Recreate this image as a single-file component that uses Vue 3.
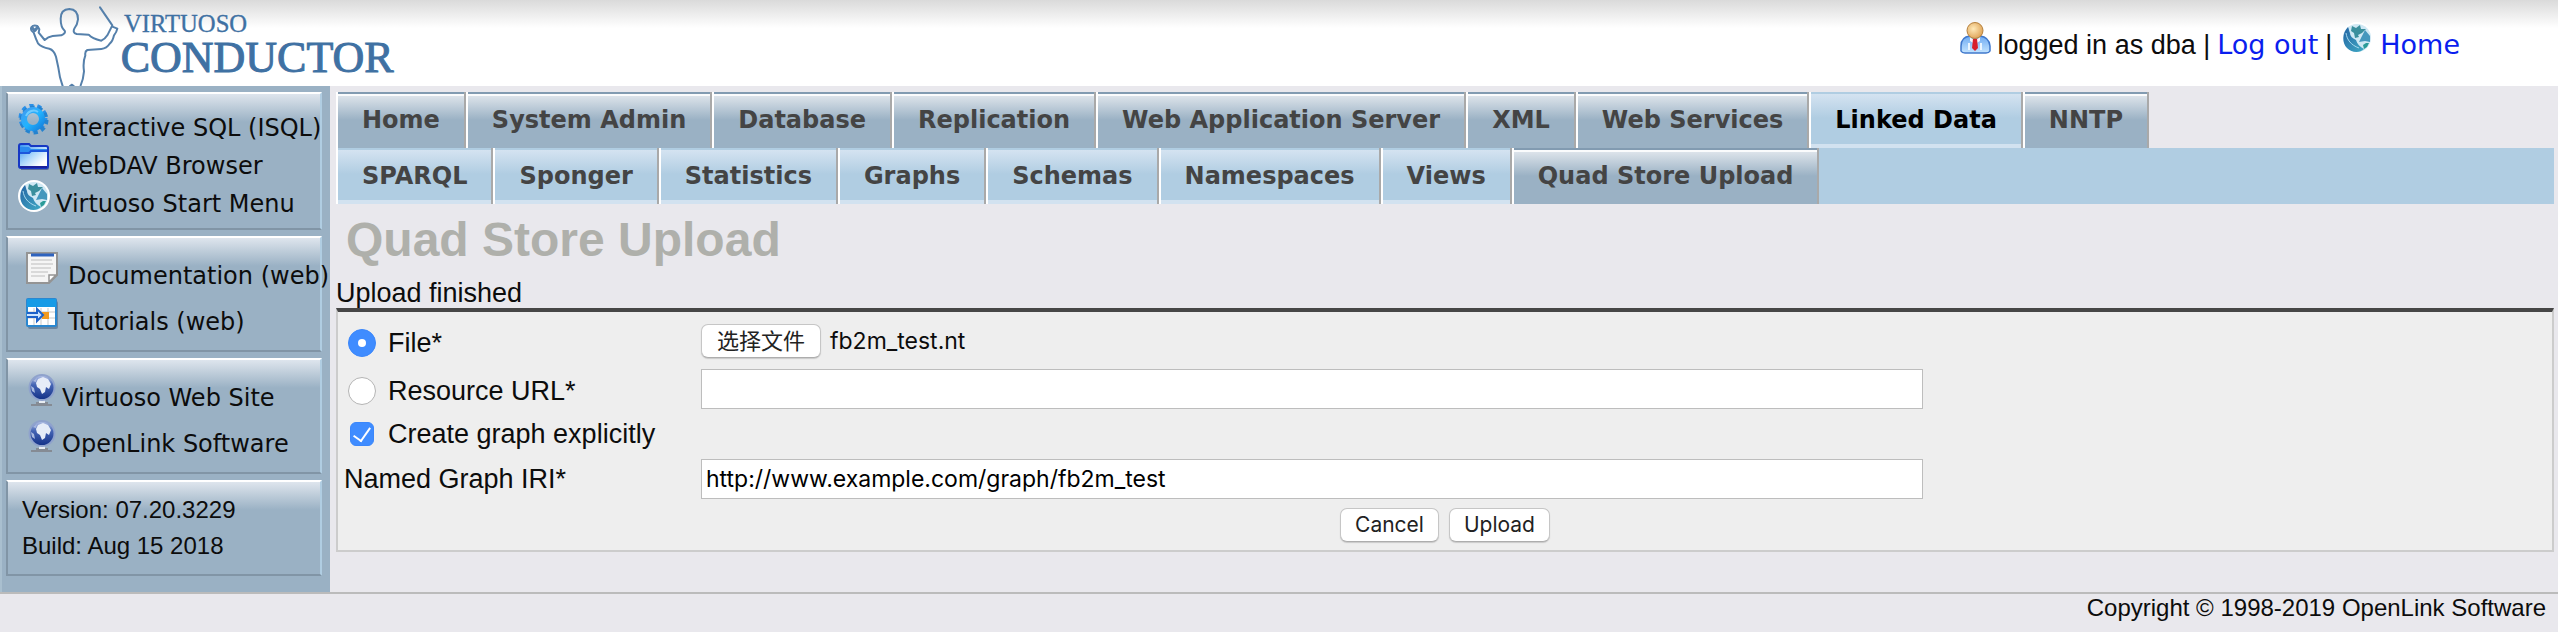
<script setup>
import { ref } from 'vue'

const mainTabs = ['Home', 'System Admin', 'Database', 'Replication', 'Web Application Server', 'XML', 'Web Services', 'Linked Data', 'NNTP']
const subTabs = ['SPARQL', 'Sponger', 'Statistics', 'Graphs', 'Schemas', 'Namespaces', 'Views', 'Quad Store Upload']

const source = ref('file')
const resourceUrl = ref('')
const createGraph = ref(true)
const graphIri = ref('http://www.example.com/graph/fb2m_test')
const fileName = ref('fb2m_test.nt')
const picker = ref(null)

function pickFile(event) {
  const file = event.target.files[0]
  if (file) fileName.value = file.name
}
</script>

<template>
  <div class="page">
    <svg class="defs" width="0" height="0" aria-hidden="true">
      <defs>
        <linearGradient id="gearFill" x1="0" y1="0" x2="1" y2="1">
          <stop offset="0" stop-color="#3f9cf0" /><stop offset=".5" stop-color="#22b4ff" /><stop offset="1" stop-color="#1583e0" />
        </linearGradient>
        <linearGradient id="folderFill" x1="0" y1="0" x2="1" y2="1">
          <stop offset="0" stop-color="#2f8ff0" /><stop offset=".45" stop-color="#a9d6fb" /><stop offset=".8" stop-color="#fff" />
        </linearGradient>
        <linearGradient id="ballFill" x1="0" y1="0" x2="0" y2="1">
          <stop offset="0" stop-color="#b9c6e8" /><stop offset=".4" stop-color="#4464b4" /><stop offset="1" stop-color="#122f86" />
        </linearGradient>
        <linearGradient id="bodyFill" x1="0" y1="0" x2="0" y2="1">
          <stop offset="0" stop-color="#6fabf2" /><stop offset="1" stop-color="#c3e4ff" />
        </linearGradient>
        <radialGradient id="headFill" cx=".4" cy=".4" r=".6">
          <stop offset="0" stop-color="#ffe9b8" /><stop offset="1" stop-color="#e0a75c" />
        </radialGradient>
        <linearGradient id="skyFill" x1="0" y1="0" x2="1" y2="1">
          <stop offset="0" stop-color="#2565a4" /><stop offset="1" stop-color="#3fa9c4" />
        </linearGradient>
        <symbol id="icon-globe" viewBox="0 0 32 32">
          <circle cx="16" cy="16" r="16" fill="#fff" />
          <circle cx="16" cy="16" r="14" fill="#cfe8f4" />
          <path d="M7 5C1 11 1 21 6 26c5 5 13 5 17 1c-4-2-7-5-8-9c-4-2-6-4-6-7C8 9 8 7 7 5z" fill="url(#skyFill)" />
          <path d="M11 4l4 2 4-3 1 4 5 0-4 4-4 2 1 2-4 1-1-5-3-2z" fill="#3a8f9d" />
          <path d="M24 8l5 6v6l-5-1-6 1 3-6z" fill="#4597bd" />
          <path d="M22 23l3-2 3 0-2 4-3 2z" fill="#2b9b98" />
          <path d="M5 11c1 7 5 12 13 15" fill="none" stroke="#a7d9ee" stroke-width="1" />
        </symbol>
        <symbol id="icon-gear" viewBox="0 0 32 32">
          <ellipse cx="15" cy="14" rx="12" ry="12" fill="none" stroke="#2a90e8" stroke-width="5" stroke-dasharray="4 3.54" />
          <ellipse cx="16" cy="16" rx="12" ry="12" fill="none" stroke="#2583cf" stroke-width="5" stroke-dasharray="4 3.54" />
          <ellipse cx="15" cy="15" rx="9" ry="9" fill="none" stroke="url(#gearFill)" stroke-width="6" />
          <path d="M8 12c2-5 8-7 12-4" fill="none" stroke="#6ecbff" stroke-width="2" />
        </symbol>
        <symbol id="icon-folder" viewBox="0 0 32 32">
          <path d="M3 5h28v21q0 2-2 2H3z" fill="#33417f" opacity=".6" />
          <path d="M1 4q0-2 2-2h8l2 2h15q2 0 2 2v18q0 2-2 2H3q-2 0-2-2z" fill="url(#folderFill)" stroke="#1638c4" stroke-width="2" />
          <path d="M2 5h9l2 2h16v3H13l-2 2H2z" fill="#2a8bf0" />
          <path d="M2 11h9l2-2h16" fill="none" stroke="#1c57dc" stroke-width="2" />
          <path d="M2 25h27" stroke="#1b219c" stroke-width="2" />
        </symbol>
        <symbol id="icon-doc" viewBox="0 0 32 32">
          <path d="M1 1h30v22l-8 8H1z" fill="#f5f5f5" stroke="#949494" stroke-width="2" />
          <path d="M5 3h23" stroke="#2e63bf" stroke-width="3" />
          <path d="M5 8h21M5 12h22M5 16h20M5 20h17M5 24h14" stroke="#cfcfcf" stroke-width="1.5" />
          <path d="M23 30v-7h7z" fill="#fff" stroke="#949494" stroke-width="1.5" />
        </symbol>
        <symbol id="icon-tutorial" viewBox="0 0 32 32">
          <rect x="2" y="3" width="30" height="28" rx="2" fill="#4b6788" opacity=".6" />
          <rect x="1" y="1" width="29" height="27" rx="1" fill="#fff" stroke="#2b87cf" stroke-width="2" />
          <rect x="1" y="1" width="29" height="8" fill="#179be6" />
          <path d="M2 14h27M2 20h27M8 10v17M15 10v17M22 10v17" stroke="#c9c9c9" />
          <rect x="16" y="14" width="7" height="7" fill="#f39a1f" />
          <path d="M1 15h10v-4l6 6-6 6v-4H1" fill="#cfe6ff" stroke="#1e62c9" stroke-width="2" />
        </symbol>
        <symbol id="icon-world" viewBox="0 0 32 32">
          <path d="M5 31h21M10 29h12" stroke="#858b94" stroke-width="2" />
          <path d="M13 25h6v4h-6z" fill="#e8edf2" />
          <circle cx="16" cy="13.500" r="12.500" fill="url(#ballFill)" stroke="#8fa2cc" stroke-width="2" />
          <path d="M12 5l5-2 5 2 3 5-2 5-3-2-1 5-3 2-2-5-3-2-1-4z" fill="#e6ecf8" />
          <path d="M5 12l3 2 1 5-3-2zM7 7l4-3-1 4z" fill="#a9b9e0" />
        </symbol>
        <symbol id="icon-user" viewBox="0 0 32 32">
          <path d="M2 29V24q0-9 9-10h10q9 1 10 10v5q-1 2-4 2H6q-3 0-4-2z" fill="url(#bodyFill)" stroke="#3f78cc" stroke-width="1.5" />
          <path d="M10 28v-7M22 28v-7" stroke="#eaf5ff" stroke-width="2" />
          <path d="M11 15l5 4 5-4v4l-5 3-5-3z" fill="#f4f8ff" />
          <path d="M14 17h4l1 9-3 3-3-3z" fill="#d81f2c" />
          <circle cx="16" cy="8.500" r="8" fill="url(#headFill)" stroke="#b5803d" />
        </symbol>
      </defs>
    </svg>

    <header class="top">
      <svg class="logo" viewBox="0 0 1200 258" role="img" aria-label="Virtuoso Conductor">
        <g fill="none" stroke="#5580ab" stroke-width="6" stroke-linejoin="round" stroke-linecap="round">
          <path d="M188 258Q184 246 180 232Q176 204 168 170Q162 150 148 146Q124 142 114 130Q108 118 101 98Q90 92 94 82Q100 74 112 78L118 88L116 98L134 120Q144 110 158 108L184 106Q198 100 194 92Q182 82 182 56Q182 28 208 27Q234 28 234 58Q232 74 224 84Q216 98 230 102L266 104Q276 116 304 122Q316 116 322 106L337 76L300 22" />
          <path d="M337 80L352 86Q350 96 342 106Q338 124 330 130Q320 146 304 147L262 150Q254 154 256 166Q248 186 252 214Q250 238 242 256M210 258L216 254L221 258" />
          <path d="M97 84L104 92L113 82" stroke-width="9" />
        </g>
        <text class="logo-small" x="372" y="96">VIRTUOSO</text>
        <text class="logo-big" x="362" y="215">CONDUCTOR</text>
      </svg>
      <div class="session">
        <svg class="icon user"><use href="#icon-user" /></svg>
        <span>logged in as dba |</span>
        <a class="wide" href="#logout">Log out</a>
        <span>|</span>
        <svg class="icon home"><use href="#icon-globe" /></svg>
        <a class="wide" href="#home">Home</a>
      </div>
    </header>

    <div class="body">
      <aside class="side">
        <nav class="panel">
          <a class="item" href="#isql"><svg class="icon"><use href="#icon-gear" /></svg>Interactive SQL (ISQL)</a>
          <a class="item" href="#dav"><svg class="icon"><use href="#icon-folder" /></svg>WebDAV Browser</a>
          <a class="item" href="#start"><svg class="icon"><use href="#icon-globe" /></svg>Virtuoso Start Menu</a>
        </nav>
        <nav class="panel roomy docs">
          <a class="item" href="#docs"><svg class="icon"><use href="#icon-doc" /></svg>Documentation (web)</a>
          <a class="item" href="#tutorials"><svg class="icon"><use href="#icon-tutorial" /></svg>Tutorials (web)</a>
        </nav>
        <nav class="panel roomy links">
          <a class="item" href="#virtuoso"><svg class="icon"><use href="#icon-world" /></svg>Virtuoso Web Site</a>
          <a class="item" href="#openlink"><svg class="icon"><use href="#icon-world" /></svg>OpenLink Software</a>
        </nav>
        <div class="panel version">
          <div>Version: 07.20.3229</div>
          <div>Build: Aug 15 2018</div>
        </div>
      </aside>

      <main class="main">
        <nav class="tabs">
          <a v-for="t in mainTabs" :key="t" href="#" class="tab" :class="t === 'Linked Data' ? 'light current' : 'dark'">{{ t }}</a>
        </nav>
        <nav class="tabs sub">
          <a v-for="t in subTabs" :key="t" href="#" class="tab" :class="t === 'Quad Store Upload' ? 'dark' : 'light'">{{ t }}</a>
        </nav>
        <h1>Quad Store Upload</h1>
        <p class="status">Upload finished</p>
        <form class="form" @submit.prevent>
          <div class="row">
            <div class="name low"><input id="src-file" v-model="source" type="radio" name="src" value="file" /><label for="src-file">File*</label></div>
            <button type="button" class="push choose" @click="picker.click()">选择文件</button>
            <span class="filename">{{ fileName }}</span>
            <input ref="picker" type="file" hidden aria-label="File" @change="pickFile" />
          </div>
          <div class="row gap">
            <div class="name low"><input id="src-url" v-model="source" type="radio" name="src" value="url" /><label for="src-url">Resource URL*</label></div>
            <input v-model="resourceUrl" class="text" type="text" aria-label="Resource URL" />
          </div>
          <div class="row tall">
            <div class="name"><input id="create" v-model="createGraph" type="checkbox" /><label for="create">Create graph explicitly</label></div>
          </div>
          <div class="row">
            <div class="name plain"><label for="iri">Named Graph IRI*</label></div>
            <input id="iri" v-model="graphIri" class="text" type="text" />
          </div>
          <div class="actions">
            <button type="button" class="push">Cancel</button>
            <button type="submit" class="push">Upload</button>
          </div>
        </form>
      </main>
    </div>

    <footer class="foot">Copyright © 1998-2019 OpenLink Software</footer>
  </div>
</template>

<style>
html, body { background: #e9e8ed; }
body { margin: 0; }
</style>

<style scoped>
.page {
  font-family: "Liberation Sans", Arial, "Noto Sans CJK SC", sans-serif;
  font-size: 27px;
  color: #0c0c0c;
}
.page * { box-sizing: border-box; }
.defs { position: absolute; }
.icon { width: 32px; height: 32px; flex: none; }

.top {
  display: flex;
  justify-content: space-between;
  height: 86px;
  background: linear-gradient(#dadada, #fff 28px);
}
.logo { width: 400px; height: 86px; }
.logo text { font-family: "Liberation Serif", serif; fill: #3f71a3; stroke: #3f71a3; }
.logo-small { font-size: 74px; stroke-width: 1; }
.logo-big { font-size: 132px; stroke-width: 3; }
.session {
  display: flex;
  align-items: baseline;
  gap: 7px;
  padding: 22px 98px 0 0;
  white-space: nowrap;
}
.session .home { margin-left: 2px; }
.session a { color: #0a1eee; text-decoration: none; }
.wide { font-family: "DejaVu Sans", Verdana, sans-serif; }

.body { display: flex; }
.side {
  flex: none;
  display: flex;
  flex-direction: column;
  gap: 6px;
  width: 330px;
  padding: 6px 8px 16px 4px;
  background: #9ab1c4;
  border-left: 2px solid #a9bfcf;
}
.panel {
  padding: 10px;
  border: 2px solid;
  border-color: #fff #b0cde2 #8195a6 #8195a6;
  background: linear-gradient(#dee5ed, #9ab1c4 28px);
}
.item {
  display: flex;
  align-items: baseline;
  gap: 6px;
  height: 38px;
  line-height: 28px;
  font-family: "DejaVu Sans", Verdana, sans-serif;
  font-size: 24px;
  color: #0c0c0c;
  text-decoration: none;
  white-space: nowrap;
}
.roomy { padding: 14px 18px; }
.roomy .item + .item { margin-top: 8px; }
.docs .item { gap: 10px; }
.links .item { gap: 4px; }
.version { padding-left: 14px; font-size: 24px; line-height: 36px; }

.main { flex: 1; min-width: 0; padding: 6px 4px 0 6px; }
.tabs { display: flex; }
.sub { background: #b0cde2; }
.tab {
  height: 56px;
  padding: 0 24px;
  border-left: 2px solid #fff;
  border-right: 2px solid #a9a9a9;
  font: bold 24px/56px "DejaVu Sans", Verdana, sans-serif;
  color: #444;
  text-decoration: none;
  white-space: nowrap;
}
.dark { background: linear-gradient(#829bb1 2px, #fafbfc 2px, #fafbfc 4px, #dce3ea 4px, #9ab1c4 28px); }
.light { background: linear-gradient(#b0cde2 2px, #d4e3f1 2px, #b0cde2 26px, #b0cde2 52px, #d2e2f0 52px); }
.current { color: #000; }

h1 {
  margin: 8px 10px 10px;
  font-size: 48px;
  line-height: 56px;
  color: #afb0ab;
}
.status { margin: 0; line-height: 30px; }
.form {
  padding: 8px 0;
  border: 2px solid #ccc;
  border-top: 4px solid #464646;
  background: #eee;
}
.row { display: flex; align-items: center; min-height: 40px; }
.row:first-child { min-height: 42px; }
.gap { margin-top: 7px; }
.tall { min-height: 50px; }
.name {
  display: flex;
  align-items: center;
  gap: 12px;
  flex: none;
  width: 363px;
  padding-left: 10px;
  line-height: 30px;
}
.low { padding-top: 4px; }
.plain { padding-left: 6px; }
input[type="radio"], input[type="checkbox"] {
  appearance: none;
  display: grid;
  place-items: center;
  width: 28px;
  height: 28px;
  margin: 0;
  border: 1px solid #b4b4b4;
  border-radius: 50%;
  background: #fff;
}
input[type="checkbox"] { width: 24px; height: 24px; margin: 0 2px; border-radius: 6px; }
input[type="radio"]:checked, input[type="checkbox"]:checked { border-color: #3b87fb; background: #3f8cff; }
input[type="radio"]:checked::after {
  content: "";
  width: 8px;
  height: 8px;
  border-radius: 50%;
  background: #fff;
}
input[type="checkbox"]:checked::after {
  content: "";
  width: 8px;
  height: 15px;
  margin-bottom: 4px;
  border: solid #fff;
  border-width: 0 2px 2px 0;
  transform: rotate(35deg);
}
.text {
  width: 100%;
  max-width: 1222px;
  height: 40px;
  padding: 0 4px;
  border: 1px solid #bdbdbd;
  background: #fff;
  font: 23px Inter, sans-serif;
  color: #000;
}
.push {
  height: 34px;
  padding: 0 14px;
  border: 1px solid #c6c6c6;
  border-bottom-color: #adadad;
  border-radius: 7px;
  background: #fff;
  box-shadow: 0 1px 1px #c9c9c9;
  font: 21px/30px Inter, "Noto Sans CJK SC", sans-serif;
  color: #222;
}
.choose { font-size: 22px; padding: 0 15px; }
.filename { margin-left: 9px; font: 23px Inter, sans-serif; }
.actions { display: flex; justify-content: center; gap: 10px; margin-top: 9px; }

.foot {
  padding-right: 12px;
  border-top: 2px solid #bbb;
  font-size: 24px;
  line-height: 28px;
  text-align: right;
}
</style>
